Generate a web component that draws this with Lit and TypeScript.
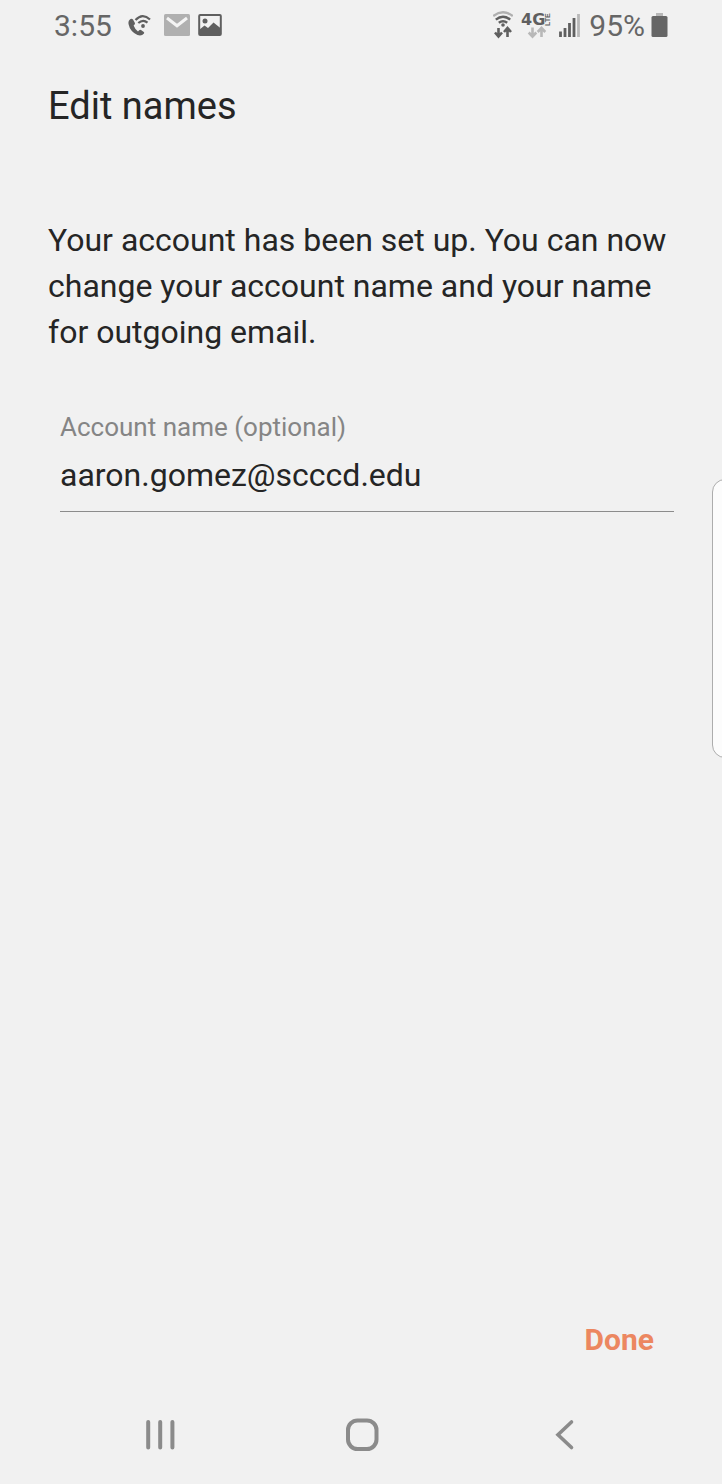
import { LitElement, html, css } from "lit";
import { customElement, state } from "lit/decorators.js";

@customElement("status-bar")
class StatusBar extends LitElement {
  static styles = css`
    :host {
      display: flex;
      justify-content: space-between;
      align-items: center;
      height: 52px;
      padding: 0 54px;
      color: #666;
      font-size: 30px;
      line-height: 36px;
    }
    .group {
      display: flex;
      align-items: center;
    }
    .left {
      gap: 8px;
    }
    .right {
      gap: 8px;
    }
    .time {
      margin-right: 8px;
    }
    .calling {
      margin-right: 4px;
    }
    .level {
      display: flex;
      align-items: center;
      gap: 6px;
    }
    svg {
      display: block;
      margin-bottom: 2px;
    }
    .net {
      font: 700 16px "DejaVu Sans", sans-serif;
    }
    .lte {
      font: 700 7px "Liberation Sans", Arial, sans-serif;
    }
  `;

  render() {
    return html`
      <div class="group left">
        <span class="time">3:55</span>
        <svg class="calling" width="24" height="24" viewBox="0 0 24 24" aria-label="Wi-Fi calling">
          <path fill="#5f5f5f" d="M2.500 6 Q0 7.500 .500 11 Q2 18.500 9.500 22 Q13.500 23.400 16 20.500 Q16.600 19.600 15.800 18.900 L13 17 Q12 16.500 11.200 17.300 L10 18.500 Q6.800 16 5.600 12.600 L6.600 11.500 Q7.300 10.800 6.800 9.800 L5 6.600 Q4 5.200 2.500 6Z" />
          <g fill="none" stroke="#5f5f5f" stroke-width="2.200">
            <path d="M7.500 7 Q14.500 -.500 22 6.500" />
            <path d="M10.300 10 Q15 5.800 19.500 9.600" />
          </g>
          <circle cx="15" cy="13" r="1.900" fill="#5f5f5f" />
        </svg>
        <svg width="26" height="24" viewBox="0 0 26 24" aria-label="Mail">
          <rect y="1" width="26" height="22" rx="1.500" fill="#b0b0b0" />
          <path d="M3 5 L13 12.800 L23 5" fill="none" stroke="#f4f4f4" stroke-width="3" />
        </svg>
        <svg width="24" height="24" viewBox="0 0 24 24" aria-label="Picture">
          <rect x="1.200" y="2" width="21.600" height="20" rx="1" fill="none" stroke="#5f5f5f" stroke-width="2" />
          <circle cx="7" cy="8" r="2.500" fill="#5f5f5f" />
          <path d="M1 17 L6.500 12.500 L10 15 L15.500 9.500 L23 15.500 V22 H1Z" fill="#5f5f5f" />
        </svg>
      </div>
      <div class="group right">
        <svg width="20" height="28" viewBox="1 0 20 28" aria-label="Wi-Fi">
          <g fill="none" stroke-width="2.400">
            <path d="M1.200 5 Q11 -2.500 20.800 5" stroke="#b0b0b0" />
            <path d="M3.800 8.600 Q11 2.800 18.200 8.600" stroke="#5f5f5f" />
            <path d="M6.800 11.800 Q11 8.600 15.200 11.800" stroke="#5f5f5f" />
          </g>
          <circle cx="11" cy="14" r="1.800" fill="#5f5f5f" />
          <path d="M6.500 17 V25 M3 21.500 L6.500 25.500 L10 21.500 M15.500 26 V18 M12 21 L15.500 17 L19 21" fill="none" stroke="#5f5f5f" stroke-width="2.600" />
        </svg>
        <svg width="30" height="28" viewBox="0 0 30 28" aria-label="4G LTE">
          <text class="net" x="0" y="14" fill="#5f5f5f">4G</text>
          <text class="lte" transform="translate(29 15) rotate(-90)" fill="#5f5f5f">LTE</text>
          <path d="M11.500 16.500 V25 M7.700 21.500 L11.500 25.500 L15.300 21.500 M20.500 26 V18 M16.700 21 L20.500 17 L24.300 21" fill="none" stroke="#b8b8b8" stroke-width="2.600" />
        </svg>
        <svg width="22" height="28" viewBox="0 0 22 28" aria-label="Signal">
          <path d="M1.500 26 V20.500 M6 26 V17 M10.500 26 V12 M15 26 V7" stroke="#5f5f5f" stroke-width="2.800" />
          <path d="M19.500 26 V3" stroke="#b8b8b8" stroke-width="2.800" />
        </svg>
        <div class="level">
          <span>95%</span>
          <svg width="17" height="24" viewBox="0 0 17 24" aria-label="Battery">
            <rect x="5" width="7" height="4" fill="#b8b8b8" />
            <rect x=".500" y="3" width="16" height="21" rx="1.500" fill="#666" />
          </svg>
        </div>
      </div>
    `;
  }
}

@customElement("nav-bar")
class NavBar extends LitElement {
  static styles = css`
    :host {
      display: grid;
      grid-template-columns: repeat(3, 1fr);
      height: 98px;
      padding: 0 57px 0 59px;
    }
    button {
      display: grid;
      place-items: center;
      padding: 0;
      border: 0;
      background: none;
    }
    svg {
      fill: none;
      stroke: #8b8b8b;
      stroke-width: 4;
      stroke-linecap: round;
    }
  `;

  render() {
    return html`
      <button aria-label="Recent apps">
        <svg width="34" height="34" viewBox="0 0 34 34">
          <path d="M5.200 4 V29.500 M17.200 4 V29.500 M29.400 4 V29.500" />
        </svg>
      </button>
      <button aria-label="Home">
        <svg width="34" height="34" viewBox="0 0 34 34">
          <rect x="3" y="2.500" width="28.500" height="28.500" rx="9.500" />
        </svg>
      </button>
      <button aria-label="Back">
        <svg width="34" height="34" viewBox="0 0 34 34">
          <path d="M24.500 4 L11 16.700 L24.500 29.500" stroke-width="3.600" />
        </svg>
      </button>
    `;
  }
}

@customElement("app-root")
class AppRoot extends LitElement {
  static styles = css`
    :host {
      display: flex;
      flex-direction: column;
      position: relative;
      overflow: hidden;
      box-sizing: border-box;
      min-height: 100vh;
      background: #f1f1f1;
      color: #252525;
      font-family: Roboto, sans-serif;
    }
    main {
      flex: 1;
      padding: 30px 48px 0;
    }
    h1 {
      margin: 0;
      font-size: 38px;
      font-weight: 400;
      line-height: 48px;
    }
    p {
      margin: 87px 0 0;
      font-size: 32px;
      line-height: 46px;
    }
    .field {
      margin: 56px 0 0 12px;
      border-bottom: 1px solid #8c8c8c;
    }
    label {
      display: block;
      color: #858585;
      font-size: 26px;
      line-height: 32px;
    }
    input {
      display: block;
      width: 100%;
      height: 68px;
      box-sizing: border-box;
      padding: 0 0 4px;
      border: 0;
      outline: 0;
      background: none;
      color: inherit;
      font: 400 32px Roboto, sans-serif;
    }
    .actions {
      display: flex;
      justify-content: flex-end;
      padding: 0 52px 22px;
    }
    .done {
      padding: 0 16px;
      border: 0;
      background: none;
      color: #ec8760;
      font: 700 30px/48px Roboto, sans-serif;
    }
    .edge {
      position: absolute;
      top: 479px;
      right: -20px;
      width: 30px;
      height: 279px;
      box-sizing: border-box;
      border: 1px solid #adadad;
      border-radius: 13px;
      background: #fcfcfc;
    }
  `;

  @state() name = "aaron.gomez@scccd.edu";

  private onInput(e: Event) {
    this.name = (e.target as HTMLInputElement).value;
  }

  render() {
    return html`
      <status-bar></status-bar>
      <main>
        <h1>Edit names</h1>
        <p>
          Your account has been set up. You can now change your account name
          and your name for outgoing email.
        </p>
        <div class="field">
          <label for="account">Account name (optional)</label>
          <input id="account" type="text" spellcheck="false" .value=${this.name} @input=${this.onInput} />
        </div>
      </main>
      <div class="actions"><button class="done">Done</button></div>
      <nav-bar></nav-bar>
      <div class="edge"></div>
    `;
  }
}
